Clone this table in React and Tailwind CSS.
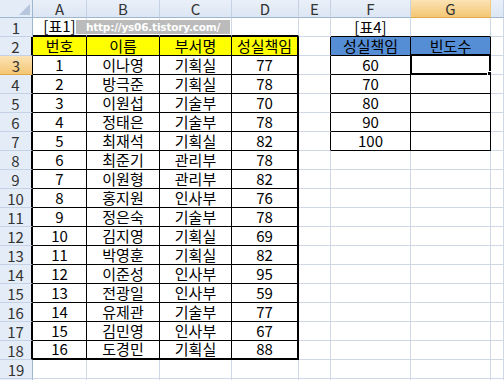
import React from 'react';

const COLS = ['A', 'B', 'C', 'D', 'E', 'F', 'G', ''];

const PEOPLE = [
  ['1', '이나영', '기획실', '77'],
  ['2', '방극준', '기획실', '78'],
  ['3', '이원섭', '기술부', '70'],
  ['4', '정태은', '기술부', '78'],
  ['5', '최재석', '기획실', '82'],
  ['6', '최준기', '관리부', '78'],
  ['7', '이원형', '관리부', '82'],
  ['8', '홍지원', '인사부', '76'],
  ['9', '정은숙', '기술부', '78'],
  ['10', '김지영', '기획실', '69'],
  ['11', '박영훈', '기획실', '82'],
  ['12', '이준성', '인사부', '95'],
  ['13', '전광일', '인사부', '59'],
  ['14', '유제관', '기술부', '77'],
  ['15', '김민영', '인사부', '67'],
  ['16', '도경민', '기획실', '88'],
];

const BINS = ['60', '70', '80', '90', '100'];

// text of a cell, r = sheet row (1-based), c = column index (1 = A)
const valueOf = (r, c) => {
  if (r === 1 && c === 1) return '[표1]';
  if (r === 1 && c === 6) return '[표4]';
  if (r === 2 && c <= 4) return ['번호', '이름', '부서명', '성실책임'][c - 1];
  if (r === 2 && c === 6) return '성실책임';
  if (r === 2 && c === 7) return '빈도수';
  if (r >= 3 && r <= 18 && c <= 4) return PEOPLE[r - 3][c - 1];
  if (r >= 3 && r <= 7 && c === 6) return BINS[r - 3];
  return '';
};

const inT1 = (r, c) => r >= 2 && r <= 18 && c >= 1 && c <= 4;

const rightCls = (r, c) => {
  if (inT1(r, c)) return c === 4 ? 'border-r-2 border-r-black' : 'border-r border-r-black';
  if (r >= 2 && r <= 7 && c >= 5 && c <= 7) return 'border-r border-r-black';
  return 'border-r border-r-[#d0d7e5]';
};

const bottomCls = (r, c) => {
  if (c >= 1 && c <= 4 && (r === 1 || r === 18)) return 'border-b-2 border-b-black';
  if (c >= 1 && c <= 4 && r >= 2 && r < 18) return 'border-b border-b-black';
  if (c >= 6 && c <= 7 && r >= 1 && r <= 7) return 'border-b border-b-black';
  return 'border-b border-b-[#d0d7e5]';
};

const bgCls = (r, c) => {
  if (r === 2 && c <= 4) return 'bg-[#ffff00]';
  if (r === 2 && (c === 6 || c === 7)) return 'bg-[#558ed5]';
  return 'bg-white';
};

const Cell = ({ r, c }) => (
  <div className={`relative flex items-end justify-center whitespace-nowrap pb-[1px] leading-[16px] text-[15px] text-black ${rightCls(r, c)} ${bottomCls(r, c)} ${bgCls(r, c)}`}>
    {valueOf(r, c)}
    {r === 3 && c === 7 && (
      <div className="absolute -left-[1px] -top-[2px] -right-[1px] -bottom-[1px] border-2 border-black">
        <div className="h-full w-full border border-white" />
        <div className="absolute -right-[4px] -bottom-[4px] h-[6px] w-[6px] bg-black border border-white" />
      </div>
    )}
  </div>
);

export default function App() {
  const rows = Array.from({ length: 20 }, (_, i) => i + 1);
  return (
    <div className="h-[380px] w-[504px] overflow-hidden bg-white font-['Noto_Sans_CJK_KR','Noto_Sans',sans-serif]">
      <div className="relative grid grid-cols-[33px_54px_73px_72px_67px_32px_80px_80px_1fr] grid-rows-[18px] auto-rows-[19px]">
        {/* corner */}
        <div className="flex items-end justify-end border-r border-b border-[#9eb6ce] bg-[#e4ecf7] p-[2px]">
          <svg width="11" height="11" viewBox="0 0 11 11">
            <path d="M11 0 L11 11 L0 11 Z" fill="#b6c6dc" />
          </svg>
        </div>
        {COLS.map((l, i) =>
          l === 'G' ? (
            <div key={i} className="flex items-center justify-center border-r border-b border-r-[#f2c97c] border-b-[#e3a94d] bg-linear-to-b from-[#fbe3b4] to-[#f4c673] text-[15px] leading-none text-[#333]">
              {l}
            </div>
          ) : (
            <div key={i} className="flex items-center justify-center border-r border-b border-r-[#c5d2e3] border-b-[#9eb6ce] bg-linear-to-b from-[#eaf0f8] to-[#dce6f4] text-[15px] leading-none text-[#333]">
              {l}
            </div>
          )
        )}

        {rows.map((r) => (
          <React.Fragment key={r}>
            {r === 3 ? (
              <div className="flex items-center justify-center border-b border-r border-b-[#e3a94d] border-r-black bg-linear-to-b from-[#fbe3b4] to-[#f4c673] text-[15px] leading-none text-[#333]">
                {r}
              </div>
            ) : r >= 2 && r <= 18 ? (
              <div className="flex items-center justify-center border-b border-r-2 border-b-[#c5d2e3] border-r-black bg-[#e4ecf7] text-[15px] leading-none text-[#333]">
                {r}
              </div>
            ) : (
              <div className="flex items-center justify-center border-b border-r border-b-[#c5d2e3] border-r-[#9eb6ce] bg-[#e4ecf7] text-[15px] leading-none text-[#333]">
                {r}
              </div>
            )}
            {COLS.map((_, ci) => (
              <Cell key={ci} r={r} c={ci + 1} />
            ))}
          </React.Fragment>
        ))}

        {/* blog watermark pasted over row 1 */}
        <div className="absolute left-[76px] top-[20px] flex h-[14px] w-[154px] items-center justify-center bg-[#b4b4b4]/90 font-['DejaVu_Sans',sans-serif] text-[10.5px] font-bold leading-none tracking-[-0.2px] text-white">
          http://ys06.tistory.com/
        </div>
      </div>
    </div>
  );
}
